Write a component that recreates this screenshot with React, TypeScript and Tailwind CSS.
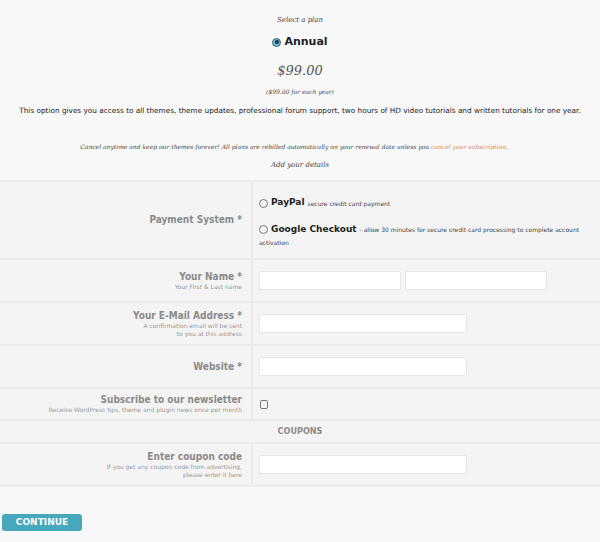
import React from "react"

const serif = "font-['DejaVu_Serif',Georgia,serif] italic"
const sans = "font-['DejaVu_Sans',Verdana,sans-serif]"
const labelFont = "font-['DejaVu_Sans_Condensed','DejaVu_Sans',Verdana,sans-serif]"

function Radio({ checked = false }: { checked?: boolean }) {
  return (
    <span
      className={`inline-flex h-[9px] w-[9px] shrink-0 items-center justify-center rounded-full border align-middle ${
        checked ? "border-[#3b6c7c] bg-[#6fb3c8]" : "border-[#777] bg-[#f4f4f4]"
      }`}
    >
      {checked && <span className="h-[4px] w-[4px] rounded-full bg-[#1d3c48]" />}
    </span>
  )
}

function Row({ label, hint, children, className = "" }: { label: string; hint?: React.ReactNode; children: React.ReactNode; className?: string }) {
  return (
    <div className={`grid grid-cols-[253px_1fr] border-b-2 border-[#ebebeb] ${className}`}>
      <div className="flex flex-col items-end justify-center border-r-2 border-[#ebebeb] pr-[9px] text-right">
        <span className={`${labelFont} text-[10px] font-bold leading-[12px] text-[#8a8a8a]`}>{label}</span>
        {hint && <span className="text-[6px] leading-[8px] text-[#999]">{hint}</span>}
      </div>
      <div className="flex items-center pl-[6px]">{children}</div>
    </div>
  )
}

function TextInput({ w = "w-[208px]" }: { w?: string }) {
  return <input type="text" className={`${w} h-[19px] rounded-[2px] border border-[#e6e6e6] bg-white`} />
}

export default function App() {
  return (
    <div className={`min-h-[542px] w-[600px] bg-[#f8f8f8] ${sans} text-[#333]`}>
      <div className="flex flex-col items-center pt-[14px]">
        <p className={`${serif} text-[7px] leading-[12px] text-[#444]`}>Select a plan</p>
        <div className="mt-[9px] flex items-center gap-[3px]">
          <Radio checked />
          <span className="text-[11px] font-bold leading-[14px] text-[#222]">Annual</span>
        </div>
        <p className={`${serif} mt-[14px] text-[13px] leading-[16px] text-[#555]`}>$99.00</p>
        <p className={`${serif} mt-[8px] text-[6px] leading-[10px] text-[#444]`}>($99.00 for each year)</p>
        <p className="mt-[8px] text-[7.3px] leading-[12px] text-[#222]">
          This option gives you access to all themes, theme updates, professional forum support, two hours of HD video tutorials and written tutorials for one year.
        </p>
        <p className={`${serif} mt-[25px] pr-[12px] text-[6px] leading-[10px] text-[#444]`}>
          Cancel anytime and keep our themes forever! All plans are rebilled automatically on your renewal date unless you{" "}
          <a className="text-[#d08a64]">cancel your subscription</a>.
        </p>
        <p className={`${serif} mt-[8px] text-[7px] leading-[10px] text-[#444]`}>Add your details</p>
      </div>

      <div className="mt-[10px] border-t-2 border-[#ebebeb] bg-[#f4f4f4]">
        <Row label="Payment System *" className="h-[78px]">
          <div className="flex flex-col gap-[13px] pt-[5px] text-[6px] text-[#444]">
            <div className="flex items-center gap-[3px]">
              <Radio />
              <span className="text-[9px] font-bold text-[#222]">PayPal</span>
              <span>secure credit card payment</span>
            </div>
            <div className="pr-[20px] leading-[13px]">
              <div className="flex items-center gap-[3px]">
                <Radio />
                <b className="text-[9px] leading-[13px] text-[#222]">Google Checkout</b>
                <span>- allow 30 minutes for secure credit card processing to complete account</span>
              </div>
              <div>activation</div>
            </div>
          </div>
        </Row>
        <Row label="Your Name *" hint="Your First & Last name" className="h-[43px]">
          <div className="flex gap-[4px]">
            <TextInput w="w-[142px]" />
            <TextInput w="w-[142px]" />
          </div>
        </Row>
        <Row
          label="Your E-Mail Address *"
          hint={
            <>
              A confirmation email will be sent
              <br />
              to you at this address
            </>
          }
          className="h-[43px]"
        >
          <TextInput />
        </Row>
        <Row label="Website *" className="h-[43px]">
          <TextInput />
        </Row>
        <Row label="Subscribe to our newsletter" hint="Receive WordPress tips, theme and plugin news once per month" className="h-[32px]">
          <span className="ml-[1px] h-[9px] w-[8px] rounded-[2px] border border-[#777] bg-[#f4f4f4]" />
        </Row>
        <div className={`${labelFont} flex h-[23px] items-center justify-center border-b-2 border-[#ebebeb] text-[9px] font-bold text-[#8a8a8a]`}>
          COUPONS
        </div>
        <Row
          label="Enter coupon code"
          hint={
            <>
              If you get any coupon code from advertising,
              <br />
              please enter it here
            </>
          }
          className="h-[43px]"
        >
          <TextInput />
        </Row>
      </div>

      <div className="flex pl-[2px] pt-[27px]">
        <button className="h-[17px] w-[80px] rounded-[3px] bg-[#48a8bb] text-[9px] font-bold text-white">CONTINUE</button>
      </div>
    </div>
  )
}
